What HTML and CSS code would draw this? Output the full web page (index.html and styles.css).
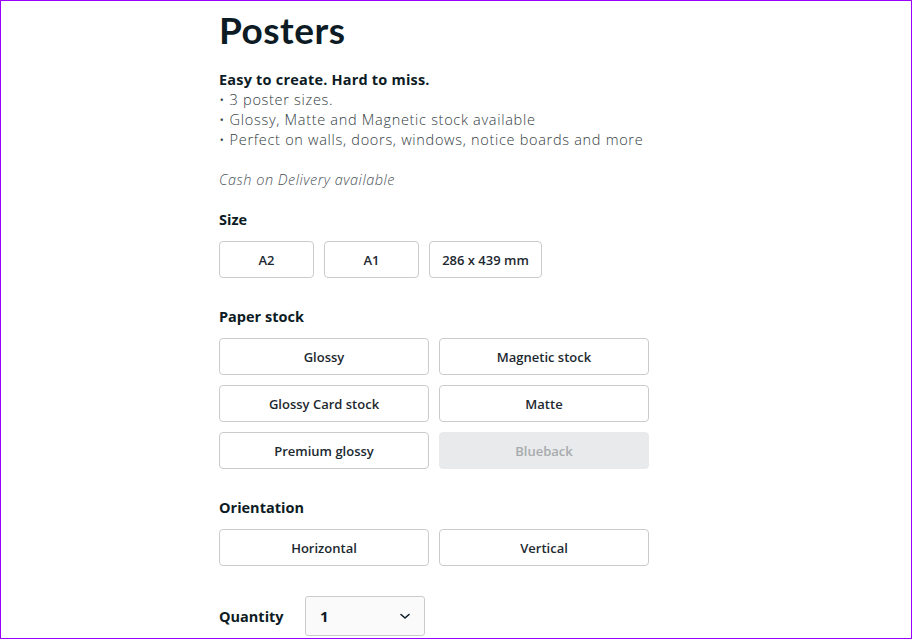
FILE: index.html
```html
<!DOCTYPE html>
<html lang="en">
<head>
  <meta charset="UTF-8" />
  <meta name="viewport" content="width=device-width, initial-scale=1.0" />
  <title>Posters</title>
  <link rel="stylesheet" href="styles.css">
</head>
<body>
  <div class="product">
    <h1>Posters</h1>
    <div class="desc">
      <p class="lead">Easy to create. Hard to miss.</p>
      <p>• 3 poster sizes.</p>
      <p>• Glossy, Matte and Magnetic stock available</p>
      <p>• Perfect on walls, doors, windows, notice boards and more</p>
    </div>
    <p class="cod">Cash on Delivery available</p>

    <div class="option">
      <h3>Size</h3>
      <div class="row">
        <button class="opt sz">A2</button>
        <button class="opt sz">A1</button>
        <button class="opt sz wide">286 x 439 mm</button>
      </div>
    </div>

    <div class="option">
      <h3>Paper stock</h3>
      <div class="grid">
        <button class="opt">Glossy</button>
        <button class="opt">Magnetic stock</button>
        <button class="opt">Glossy Card stock</button>
        <button class="opt">Matte</button>
        <button class="opt">Premium glossy</button>
        <button class="opt disabled" disabled>Blueback</button>
      </div>
    </div>

    <div class="option">
      <h3>Orientation</h3>
      <div class="grid">
        <button class="opt">Horizontal</button>
        <button class="opt">Vertical</button>
      </div>
    </div>

    <div class="qty">
      <span class="qty-label">Quantity</span>
      <div class="select">
        <span>1</span>
        <svg width="12" height="8" viewBox="0 0 12 8"><path d="M2 2.5 L6 6 L10 2.5" fill="none" stroke="#0d1b24" stroke-width="1.6" stroke-linecap="round" stroke-linejoin="round"/></svg>
      </div>
    </div>
  </div>
</body>
</html>
```

FILE: styles.css
```css
html, body { height: 100%; }
body { margin: 0; box-sizing: border-box; border: 1px solid #9b00ff; background: #fff; font-family: "Open Sans", Lato, sans-serif; color: #0d1b24; overflow: hidden; }
.product { width: 430px; padding-left: 218px; }
h1 { margin: 0; padding-top: 9px; font-family: Lato, sans-serif; font-size: 37px; line-height: 40px; font-weight: 700; letter-spacing: 0.5px; }
.desc { margin-top: 20px; }
.desc p { margin: 0; font-size: 14.5px; line-height: 20px; font-weight: 300; color: #333c42; letter-spacing: 0.7px; }
.desc p.lead { font-weight: 700; color: #0d1b24; font-size: 14.5px; letter-spacing: 0.2px; }
.cod { margin: 20px 0 0; font-size: 14.5px; line-height: 20px; font-style: italic; font-weight: 300; color: #4a5358; letter-spacing: 0.5px; }
.option { margin-top: 20px; }
.option + .option { margin-top: 29px; }
h3 { margin: 0 0 11px; font-size: 14.5px; line-height: 20px; font-weight: 700; }
.row { display: flex; gap: 10px; }
.grid { display: grid; grid-template-columns: 1fr 1fr; gap: 10px; }
.opt { height: 37px; border: 1px solid #c9cccf; border-radius: 4px; background: #fff; font-family: inherit; font-size: 13px; font-weight: 600; color: #1d2930; padding: 0; }
.sz { width: 95px; }
.sz.wide { width: 113px; }
.opt.disabled { background: #e9eaeb; border-color: #e9eaeb; color: #a7abae; }
.qty { display: flex; align-items: center; margin-top: 30px; }
.qty-label { width: 86px; font-size: 14.5px; font-weight: 700; }
.select { width: 120px; height: 40px; box-sizing: border-box; border: 1px solid #c9cccf; border-radius: 3px; background: #fafafa; display: flex; align-items: center; justify-content: space-between; padding: 0 13px 0 14px; font-size: 15px; font-weight: 700; }
```
